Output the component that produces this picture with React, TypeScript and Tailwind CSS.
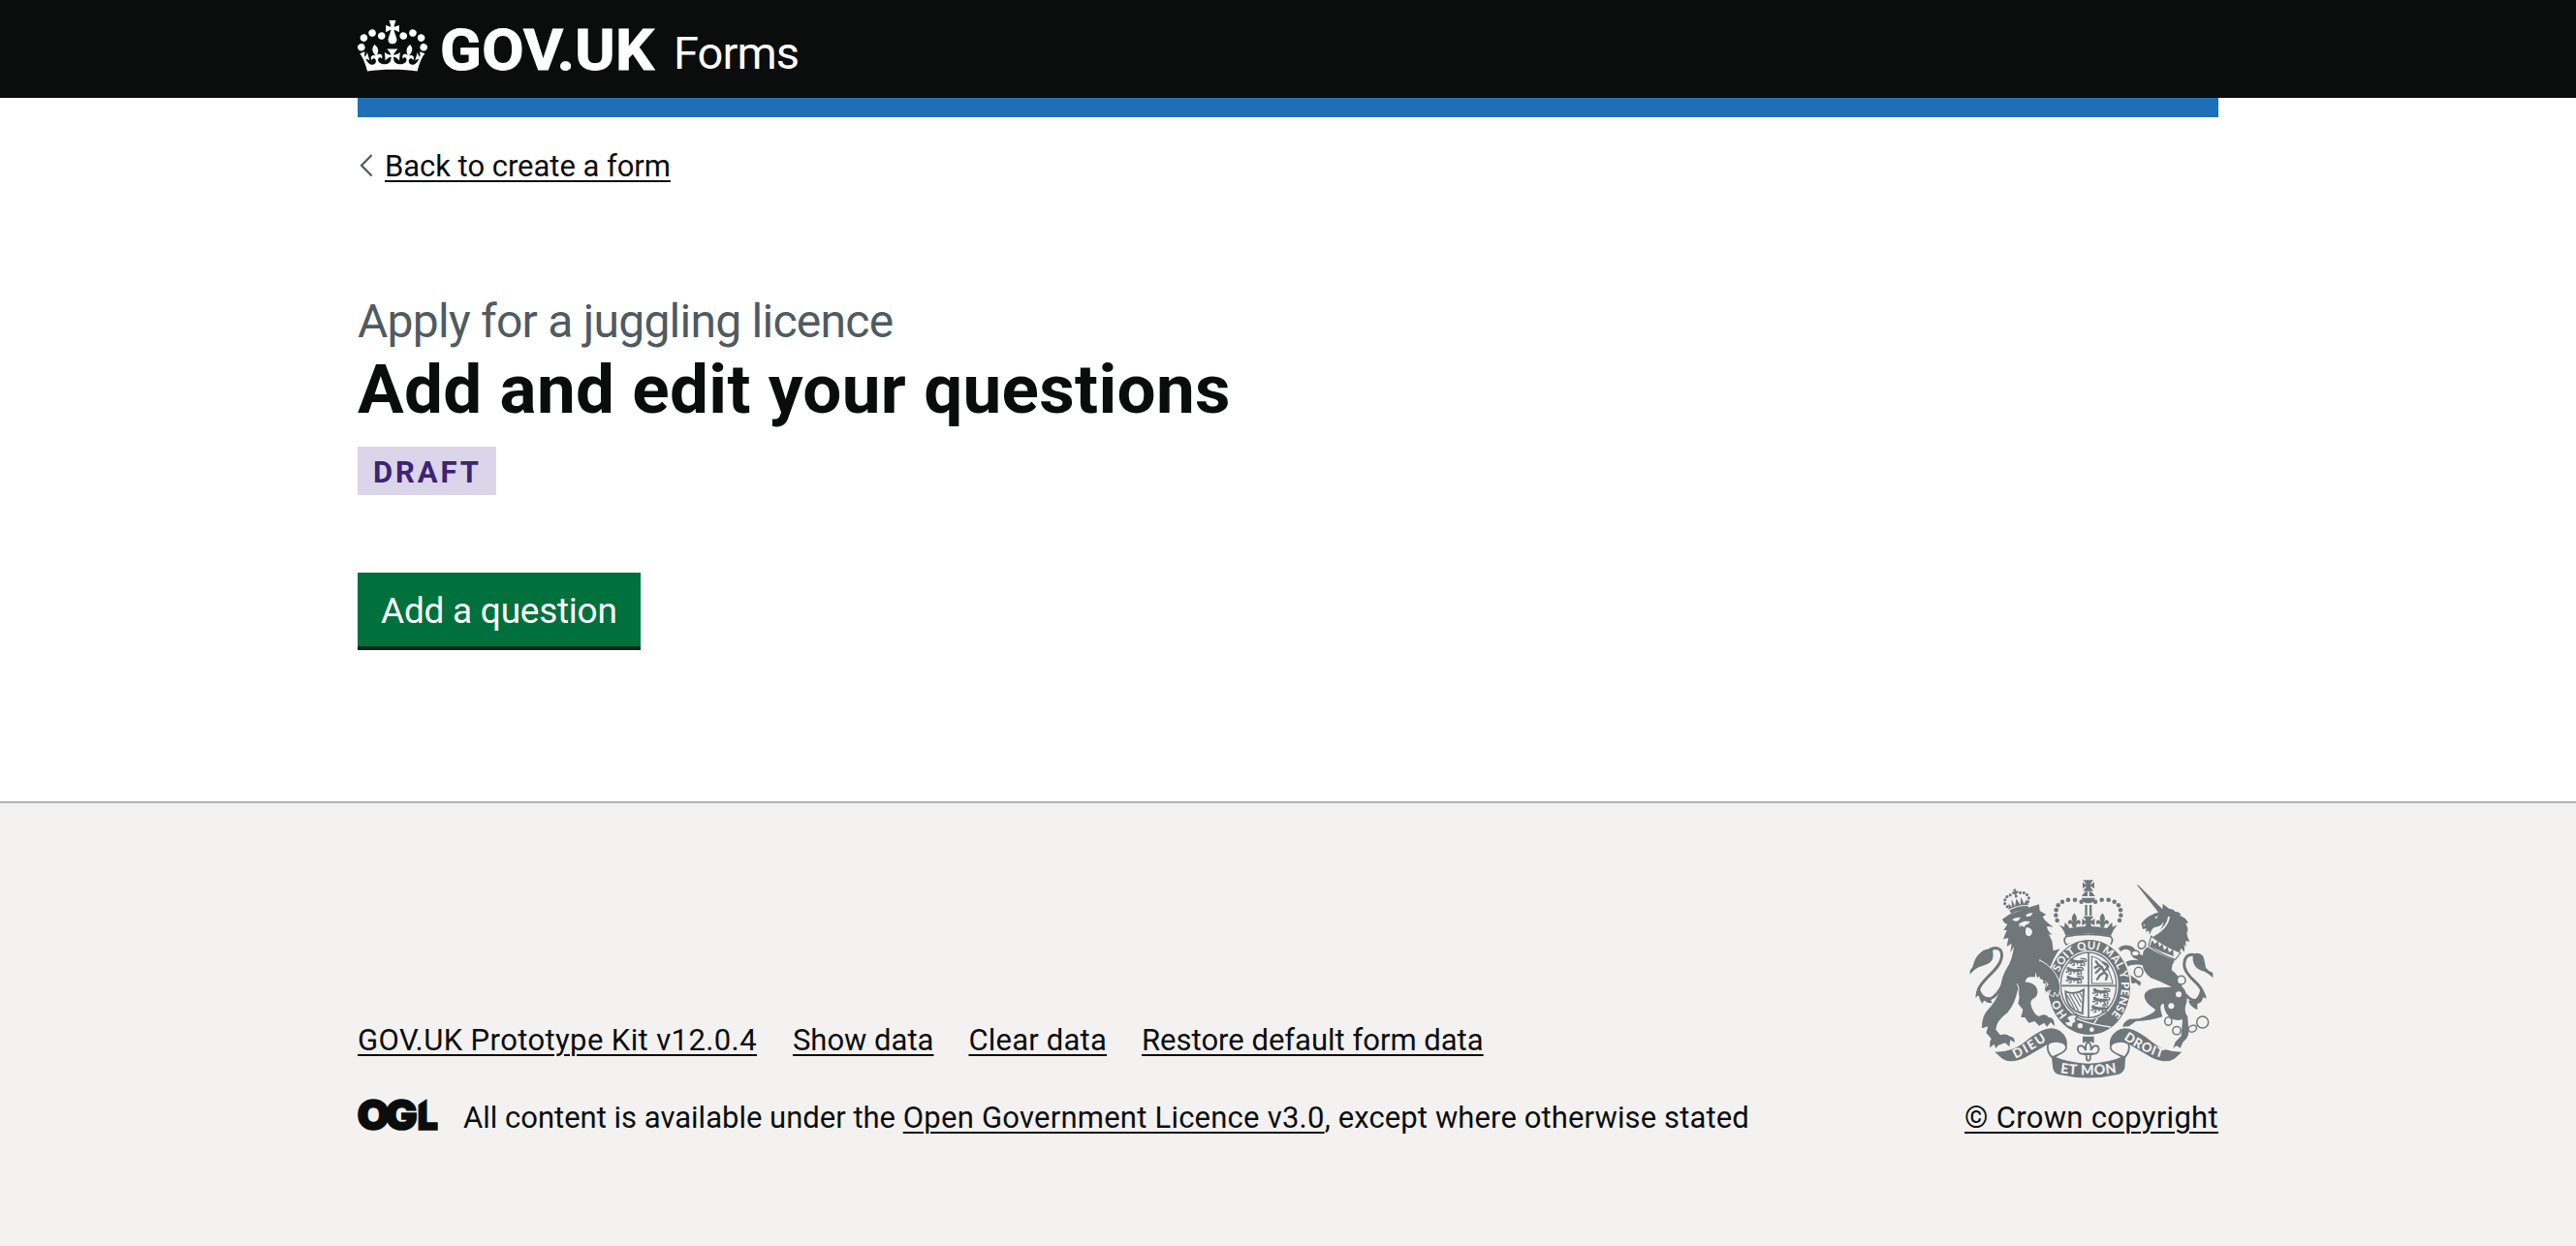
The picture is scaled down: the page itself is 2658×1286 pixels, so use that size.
import type { ReactNode } from "react";

const INK = "#6f777b";
const PAPER = "#f3f2f1";

function Crown() {
  return (
    <svg viewBox="0 0 132 97" className="mt-[21px] h-[53px] w-[72px] shrink-0" fill="#fff" aria-hidden="true">
      <path
        fillRule="evenodd"
        d="M25 30.2c3.5 1.5 7.7-.2 9.1-3.7 1.5-3.6-.2-7.8-3.9-9.2-3.6-1.4-7.6.3-9.1 3.9-1.4 3.5.3 7.5 3.9 9zM9 39.5c3.6 1.5 7.8-.2 9.2-3.7 1.5-3.6-.2-7.8-3.9-9.1-3.6-1.5-7.6.2-9.1 3.8-1.4 3.5.3 7.5 3.8 9zM4.4 57.2c3.5 1.5 7.7-.2 9.1-3.8 1.5-3.6-.2-7.7-3.9-9.1-3.5-1.5-7.6.3-9.1 3.8-1.4 3.5.3 7.6 3.9 9.1zm38.3-21.4c3.5 1.5 7.7-.2 9.1-3.8 1.5-3.6-.2-7.7-3.9-9.1-3.6-1.5-7.6.3-9.1 3.8-1.3 3.6.4 7.7 3.9 9.1zm64.4-5.6c-3.6 1.5-7.8-.2-9.1-3.7-1.5-3.6.2-7.8 3.8-9.2 3.6-1.4 7.7.3 9.2 3.9 1.3 3.5-.4 7.5-3.9 9zm15.9 9.3c-3.6 1.5-7.7-.2-9.1-3.7-1.5-3.6.2-7.8 3.7-9.1 3.6-1.5 7.7.2 9.2 3.8 1.5 3.5-.3 7.5-3.8 9zm4.7 17.7c-3.6 1.5-7.8-.2-9.2-3.8-1.5-3.6.2-7.7 3.9-9.1 3.6-1.5 7.7.3 9.2 3.8 1.3 3.5-.4 7.6-3.9 9.1zM89.3 35.8c-3.6 1.5-7.8-.2-9.2-3.8-1.4-3.6.2-7.7 3.9-9.1 3.6-1.5 7.7.3 9.2 3.8 1.4 3.6-.3 7.7-3.9 9.1zM69.7 17.7l8.9 4.7V9.3l-8.9 2.8c-.2-.3-.5-.6-.9-.9L72.4 0H59.6l3.5 11.2c-.3.3-.6.5-.9.9l-8.8-2.8v13.1l8.8-4.7c.3.3.6.7.9.9l-5 15.4v.1c-.2.8-.4 1.6-.4 2.4 0 4.1 3.1 7.5 7 8.1h.2c.3 0 .7.1 1 .1.4 0 .7 0 1-.1h.2c4-.6 7.1-4.1 7.1-8.1 0-.8-.1-1.7-.4-2.4V34l-5.1-15.4c.4-.2.7-.6 1-.9zM66 92.8c16.9 0 32.8 1.1 47.1 3.2 4-16.9 8.9-26.7 14-33.5l-9.6-3.4c1 4.9 1.1 7.2 0 10.2-1.5-1.4-3-4.3-4.2-8.7L108.6 76c2.8-2 5-3.2 7.5-3.3-4.4 9.4-10 11.9-13.6 11.2-4.3-.8-6.3-4.6-5.6-7.9 1-4.7 5.7-5.9 8-.5 4.3-8.7-3-11.4-7.6-8.8 7.1-7.2 7.9-13.5 2.1-21.1-8 6.1-8.1 12.3-4.5 20.8-4.7-5.4-12.1-2.5-9.5 6.2 3.4-5.2 7.9-2 7.2 3.1-.6 4.3-6.4 7.8-13.5 7.2-10.3-.9-10.9-8-11.2-13.8 2.5-.5 7.1 1.8 11 7.3L80.2 60c-4.1 4.4-8 5.3-12.3 5.4 1.4-4.4 8-11.6 8-11.6H55.5s6.4 7.2 7.9 11.6c-4.2-.1-8-1-12.3-5.4l1.4 16.4c3.9-5.5 8.5-7.7 10.9-7.3-.3 5.8-.9 12.8-11.1 13.8-7.2.6-12.9-2.9-13.5-7.2-.7-5 3.8-8.3 7.1-3.1 2.7-8.7-4.6-11.6-9.4-6.2 3.7-8.5 3.6-14.7-4.6-20.8-5.8 7.6-5 13.9 2.2 21.1-4.7-2.6-11.9.1-7.7 8.8 2.3-5.5 7.1-4.2 8.1.5.7 3.3-1.3 7.1-5.7 7.9-3.5.7-9-1.8-13.5-11.2 2.5.1 4.7 1.3 7.5 3.3l-4.7-15.4c-1.2 4.4-2.7 7.2-4.3 8.7-1.1-3-.9-5.3 0-10.2l-9.5 3.4c5 6.9 9.9 16.7 14 33.5 14.8-2.1 30.8-3.2 47.7-3.2z"
      />
    </svg>
  );
}

/* One walking lion of the quartered shield, 60 wide and 26 high. */
function SmallLion({ x, y }: { x: number; y: number }) {
  return (
    <g transform={`translate(${x} ${y})`} fill="none" stroke={INK} strokeLinecap="round">
      <path strokeWidth="9" d="M9 8 L15 9 Q28 14 43 11" />
      <path strokeWidth="4" d="M14 12 L8 17 L3 16 M17 13 L18 22 L12 23 M40 12 L38 18 L43 23 L37 24 M44 12 L50 18 L49 24 M46 10 Q58 14 55 6 Q52 1 45 3 L38 2 M26 14 L28 19 M6 4 L12 3" />
    </g>
  );
}

function Fleur({ x, y }: { x: number; y: number }) {
  return (
    <path
      transform={`translate(${x} ${y})`}
      d="M0-18Q9-8 8 0Q7 7 3 11Q11 1 17 5Q23 12 16 18Q13 13 8 16L5 27H-5L-8 16Q-13 13-16 18Q-23 12-17 5Q-11 1-3 11Q-7 7-8 0Q-9-8 0-18Z"
    />
  );
}

function RoyalArms() {
  const beads = [
    [413, 124], [393, 118], [372, 118], [354, 124], [341, 135], [335, 150], [334, 166], [338, 182],
  ];
  return (
    <svg viewBox="63 50 762 630" className="ml-[4px] h-[210px] w-[254px]" fill={INK} aria-hidden="true">
      <defs>
        <path id="garter" d="M437 505A100 117 0 0 1 437 271A100 117 0 0 1 437 505" />
        <path id="dieu" d="M209 610Q253 590 313 548" />
        <path id="etmon" d="M347 654Q435 667 524 653" />
        <path id="droit" d="M543 549Q600 590 668 609" />
      </defs>

      {/* Lion: tail, body, head and small crown */}
      <path fill="none" stroke={INK} strokeWidth="9" d="M128 273C150 261 170 268 166 297C160 335 105 363 95 395C92 420 112 430 132 424C148 418 160 400 172 376" />
      <path d="M138 270C112 266 90 285 81 310Q79 325 68 337V350Q84 327 108 322Q140 315 140 290Z" />
      <path d="M96 385Q84 400 86 422Q92 412 97 414Q96 430 108 440Q108 430 114 430Q122 440 137 437L128 420Q104 420 96 385Z" />
      <path d="M168 178L190 163L236 146L282 132L284 152L304 164L293 170Q300 186 326 202L306 200Q308 216 323 226L312 225L322 246L326 276L347 270Q322 300 318 335Q340 345 346 400L337 412L326 396L327 414L313 410L314 398L300 406L298 394L302 378L288 376L296 366L283 362L270 358Q250 356 238 372Q262 372 274 390Q284 415 262 426Q250 434 262 458Q272 480 284 478Q302 468 312 482Q330 482 330 510L318 497L306 511L298 499L282 508L268 494L250 499L238 482L226 482L232 458L217 440L221 420L216 396Q208 440 184 468Q150 492 148 520L162 537Q180 530 192 541Q208 543 206 560L193 552L190 573L177 561L156 568L148 578L143 565L130 576Q128 556 134 548L118 530L124 510L105 516Q104 480 122 460Q148 434 160 400Q166 356 182 330Q200 302 204 262L193 282L197 254L182 262L187 236L171 240L182 212L172 212L184 194Q172 190 168 178Z" />
      <g fill={PAPER}>
        <path d="M198 180Q208 171 224 172Q222 182 210 185Z M240 166Q250 158 262 159Q260 169 246 171Z M220 192L236 184L254 185L250 192L240 196L236 202L226 198L222 204Z" />
        <path d="M242 204Q256 202 261 216Q260 230 250 231Q238 230 240 212Z" />
        <path d="M270 358Q240 352 240 372Q262 378 278 378Q284 394 300 406L308 408L298 390L304 378L293 378L298 366L284 366L284 354L277 360L270 342Z" />
      </g>
      <path fill="none" stroke={PAPER} strokeWidth="3" d="M214 378Q222 390 218 410" />
      <g transform="rotate(-13 215 130)">
        <path d="M186 142Q215 134 246 142L243 156Q215 149 189 156Z" />
        {[[182, 132], [177, 121], [180, 110], [188, 102], [199, 99], [231, 99], [242, 102], [250, 110], [253, 121], [248, 132]].map(([x, y]) => (
          <circle key={`${x}-${y}`} cx={x} cy={y} r="4.6" />
        ))}
        <path d="M211 84H221L218 91H225V99H218L221 110H211L214 99H207V91H214Z M184 142L188 124L196 136L200 112L206 136L215 114L223 136L230 112L235 136L244 124L247 142Z" />
        <path fill="none" stroke={PAPER} strokeWidth="3" d="M186 143Q215 135 246 143" />
      </g>

      {/* Unicorn: horn, head, collar, body, legs and tail */}
      <path d="M584 71L590 73L665 148L652 158Z" />
      <path d="M650 157L664 146L665 130L685 146Q698 146 704 156Q712 152 722 164L716 166Q738 174 744 190L736 190Q744 204 742 220L738 214Q740 232 748 248L736 245V264L730 256Q734 268 731 280L722 268L716 280Q680 270 634 232Q664 212 668 186Q658 202 644 202Q632 202 624 226L621 213L612 218L614 207L603 209L598 192Q610 172 640 160Z" />
      <path fill="none" stroke={PAPER} strokeWidth="6" d="M684 170Q680 206 630 232" />
      <path fill={PAPER} d="M640 172L650 168L645 177Z M604 196L610 193L609 200Z" />
      <path d="M618 264Q660 292 702 304Q692 320 692 336Q718 352 724 386Q745 408 738 438Q728 462 742 480L745 530Q742 548 728 558L719 577L708 570L697 577L704 558L722 540L726 488Q700 496 684 480Q668 462 668 440Q650 440 664 480Q630 492 582 494L560 510L540 511Q544 494 562 487L592 486Q640 470 642 458Q606 436 608 414Q612 392 660 390L692 388Q656 370 628 360Q606 344 602 320Q572 316 552 326Q548 342 566 352L598 374L594 385L582 375L570 378L548 352Q534 336 545 312Q568 300 590 306L572 296L564 276Q548 266 535 278L527 268Q542 254 562 260Q580 264 582 282L604 291Q600 276 618 264Z" />
      <path fill={PAPER} stroke={INK} strokeWidth="3.5" d="M629 231Q670 262 720 282L704 303Q660 288 621 259Z" />
      <path d="M627 256L632 243L640 255L650 246L654 264L664 254L669 274L680 263L684 281L697 271L698 293Q660 280 627 262Z" />
      <path fill="none" stroke={INK} strokeWidth="9" d="M768 290C740 282 728 300 732 326C740 362 778 372 787 402C790 432 758 440 736 412" />
      <path d="M758 288Q776 276 790 293Q796 312 798 328Q806 340 820 344V360Q804 342 784 337Q762 330 758 306Z" />
      <path d="M782 390Q798 404 800 424L790 420Q786 438 772 440L772 458Q750 450 744 430Q776 434 782 390Z" />
      <g fill="none" stroke={INK} strokeWidth="4.5">
        <ellipse cx="600" cy="257" rx="11" ry="13" transform="rotate(30 600 257)" />
        <ellipse cx="580" cy="284" rx="12" ry="9" fill={PAPER} />
        <ellipse cx="590" cy="342" rx="13" ry="15" fill={PAPER} />
        <circle cx="722" cy="367" r="13" fill={PAPER} />
        <ellipse cx="682" cy="494" rx="11" ry="13" />
        <circle cx="708" cy="523" r="12.5" />
        <ellipse cx="757" cy="517" rx="13" ry="10" transform="rotate(-25 757 517)" />
        <circle cx="788" cy="497" r="18" />
      </g>
      <circle cx="714" cy="411" r="9" fill={PAPER} />
      <circle cx="691" cy="447" r="9" fill={PAPER} />

      {/* Imperial crown */}
      <path d="M418 57H450L440 70Q446 71 453 63V84Q446 76 440 77L450 91H418L429 77Q423 76 417 84V63Q423 71 429 70Z" />
      <path d="M432 91V107H414Q420 94 432 91ZM437 91V107H455Q449 94 437 91ZM414 112H455Q454 128 434 129Q415 128 414 112Z" />
      <path d="M424 134H431V167H424ZM438 134H445V167H438Z" />
      {beads.map(([x, y]) => (
        <g key={x}>
          <circle cx={x} cy={y} r="6.8" />
          <circle cx={869 - x} cy={y} r="6.8" />
        </g>
      ))}
      <Fleur x={391} y={177} />
      <Fleur x={478} y={177} />
      <path d="M418 169H451L441 182Q446 184 454 176V198Q446 192 441 192L446 205H423L428 192Q422 192 415 198V176Q423 184 428 182Z" />
      <path d="M345 196L360 202L362 188Q372 196 376 206Q434 194 493 206Q498 196 508 188L509 202L524 196Q509 212 504 230Q434 215 365 230Q360 212 345 196Z" />
      <path fill={PAPER} stroke={INK} strokeWidth="5" d="M365 232Q434 218 504 232Q514 244 502 258Q434 236 367 258Q355 244 365 232Z" />

      {/* Garter and shield */}
      <ellipse cx="437" cy="388" rx="132" ry="152" fill={PAPER} />
      <ellipse cx="437" cy="389" rx="127" ry="147" />
      <ellipse cx="435" cy="382" rx="92" ry="107" fill={PAPER} />
      <ellipse cx="435" cy="382" rx="86" ry="101" fill="none" stroke={INK} strokeWidth="4" />
      <path fill="none" stroke={INK} strokeWidth="5" d="M435 281V483M349 384H521" />
      <SmallLion x={373} y={298} />
      <SmallLion x={363} y={325} />
      <SmallLion x={363} y={352} />
      <SmallLion x={445} y={391} />
      <SmallLion x={445} y={417} />
      <SmallLion x={440} y={443} />
      <path fill="none" stroke={INK} strokeWidth="3.5" d="M445 377V293Q496 306 510 377Z" />
      <path fill="none" stroke={INK} strokeWidth="7" strokeLinecap="round" d="M458 309L465 318L476 326L484 342L493 352L489 365M467 322L455 328M472 330L458 344M482 344L470 352L462 364M488 334Q500 328 492 318L480 312" />
      <path fill="none" stroke={INK} strokeWidth="6" d="M364 402Q392 414 420 397L416 470L402 465Q366 452 364 402Z" />
      <path stroke={INK} strokeWidth="3.5" d="M376 410L404 462M387 410L410 450M398 409L413 436M408 406L416 420M369 414L392 456" />
      <g fill={PAPER} className="font-['Lato'] font-black">
        <text fontSize="34"><textPath href="#garter" startOffset="76" textLength="56">HO</textPath></text>
        <text fontSize="34"><textPath href="#garter" startOffset="217" textLength="388">SOIT QUI MAL Y PENSE</textPath></text>
      </g>
      <path fill="none" stroke={PAPER} strokeWidth="4" d="M392 484Q440 504 504 512M452 500L464 484" />
      <circle cx="409" cy="508" r="8" fill={PAPER} />
      <circle cx="445" cy="520" r="7" fill={PAPER} />
      <path fill={PAPER} stroke={INK} strokeWidth="5" d="M366 482Q384 468 402 478L394 486Q402 498 388 502L386 514Q364 512 360 496L374 494Z" />

      {/* Forepaw laid over the garter */}
      <path stroke={PAPER} strokeWidth="3" d="M284 304Q330 330 343 366Q352 386 345 406L339 418L330 404L327 418L312 410L317 398L302 406L298 392L310 380L296 366Z" />
      <path d="M270 310L286 309L306 326L300 375L275 345Z" />

      {/* Motto ribbon */}
      <path d="M145 589Q200 590 240 556Q290 516 322 516Q352 518 366 548Q374 572 358 586L334 606Q326 600 330 594Q350 582 340 568Q326 556 308 566L240 606Q196 628 168 610Z" />
      <path d="M724 589Q669 590 629 556Q579 516 547 516Q517 518 503 548Q495 572 511 586L535 606Q543 600 539 594Q519 582 529 568Q543 556 561 566L629 606Q673 628 701 610Z" />
      <g fill={PAPER} stroke={INK} strokeWidth="5.5">
        <path d="M310 564Q326 554 346 558Q368 562 366 578Q360 592 330 602L328 612Q302 588 310 564Z" />
        <path d="M559 564Q543 554 523 558Q501 562 503 578Q509 592 539 602L541 612Q567 588 559 564Z" />
      </g>
      <path d="M320 600Q435 650 550 600L547 640Q540 656 526 659Q435 680 343 659Q329 656 325 640Z" />
      <g fill={PAPER} className="font-['Lato'] font-black">
        <text fontSize="40"><textPath href="#dieu" textLength="112">DIEU</textPath></text>
        <text fontSize="43"><textPath href="#etmon" textLength="176">ET MON</textPath></text>
        <text fontSize="40"><textPath href="#droit" textLength="134">DROIT</textPath></text>
      </g>

      {/* Badge between the ribbon folds */}
      <path d="M417 541H452V562Q434 550 417 562Z" />
      <path fill={PAPER} stroke={INK} strokeWidth="5.5" d="M434 556Q446 568 442 584Q452 564 464 572Q472 586 458 594L442 596L440 604Q442 616 434 616Q427 616 429 604L427 596L410 594Q397 586 404 572Q417 564 427 584Q423 568 434 556Z" />
      <path d="M418 592H451V599H418Z" />
    </svg>
  );
}

function OglLogo() {
  return (
    <svg viewBox="0 0 82 34" className="h-[34px] w-[82px] shrink-0 overflow-visible" fill="#0b0c0c" role="img">
      <g className="font-['Inter'] font-black" fontSize="43" stroke="#0b0c0c" strokeWidth="1.6">
        <text x="-.5" y="32.6" textLength="33.5" lengthAdjust="spacingAndGlyphs">O</text>
        <text x="28.2" y="32.6" textLength="33.5" lengthAdjust="spacingAndGlyphs">G</text>
        <text x="61.5" y="33" textLength="21.5" lengthAdjust="spacingAndGlyphs">L</text>
      </g>
      <path fill={PAPER} d="M61 0H73L62 7.5Z" />
    </svg>
  );
}

function Link({ children, className = "" }: { children: ReactNode; className?: string }) {
  return (
    <a href="#" className={`whitespace-nowrap underline decoration-2 underline-offset-[4px] ${className}`}>
      {children}
    </a>
  );
}

export default function App() {
  return (
    <div className="flex h-[1286px] flex-col overflow-hidden bg-white font-['Roboto',sans-serif] text-[31px] leading-[40px] text-[#0b0c0c]">
      <header className="h-[101px] shrink-0 bg-[#0b0c0c] text-white">
        <div className="mx-auto flex w-[1920px] items-start">
          <Crown />
          <span className="mt-[22px] ml-[13px] w-[241px] origin-left scale-x-[1.065] text-[59px] leading-[60px] font-bold tracking-[0.3px] [-webkit-text-stroke:1px_white]">
            GOV.UK
          </span>
          <span className="mt-[25px] text-[47px] leading-[60px] tracking-[-0.9px]">Forms</span>
        </div>
      </header>

      <div className="mx-auto flex w-[1920px] grow flex-col items-start">
        <div className="h-[20px] w-full bg-[#1d70b8]" />
        <div className="mt-[31px] flex">
          <svg viewBox="0 0 28 40" className="h-[40px] w-[28px]" fill="none" stroke="#505a5f" strokeWidth="2.2" aria-hidden="true">
            <path d="M14.6 8L4 18.7L14.6 29.4" />
          </svg>
          <Link className="tracking-[-0.04px]">Back to create a form</Link>
        </div>

        <main className="mt-[110px] flex flex-col items-start">
          <span className="text-[48px] leading-[60px] tracking-[-0.75px] text-[#505a5f]">Apply for a juggling licence</span>
          <h1 className="text-[71px] leading-[80px] font-bold tracking-[0.33px]">Add and edit your questions</h1>
          <strong className="mt-[19px] h-[50px] w-[143px] bg-[#dbd5e9] pl-[16px] leading-[53px] font-bold tracking-[2.9px] text-[#3d2375]">DRAFT</strong>
          <button className="mt-[80px] h-[76px] w-[292px] bg-[#00703c] pl-[24px] text-left text-[37px] leading-[79px] tracking-[-0.25px] whitespace-nowrap text-white shadow-[0_4px_0_#002d18]">
            Add a question
          </button>
        </main>
      </div>

      <footer className="h-[459px] shrink-0 border-t-2 border-[#b1b4b6] bg-[#f3f2f1]">
        <div className="mx-auto flex w-[1920px] justify-between">
          <div className="pt-[225px]">
            <nav className="flex gap-[36px]">
              <Link className="mr-[1px] tracking-[0.39px]">GOV.UK Prototype Kit v12.0.4</Link>
              <Link>Show data</Link>
              <Link className="tracking-[0.2px]">Clear data</Link>
              <Link>Restore default form data</Link>
            </nav>
            <div className="mt-[39px] flex gap-[27px]">
              <OglLogo />
              <p className="mt-px whitespace-nowrap">
                All content is available under the{" "}
                <Link className="tracking-[0.23px]">Open Government Licence v3.0</Link>
                <span className="tracking-[0.12px]">, except where otherwise stated</span>
              </p>
            </div>
          </div>
          <div className="flex w-[262px] flex-col pt-[77px]">
            <RoyalArms />
            <Link className="mt-[18px] tracking-[0.31px]">© Crown copyright</Link>
          </div>
        </div>
      </footer>
    </div>
  );
}
